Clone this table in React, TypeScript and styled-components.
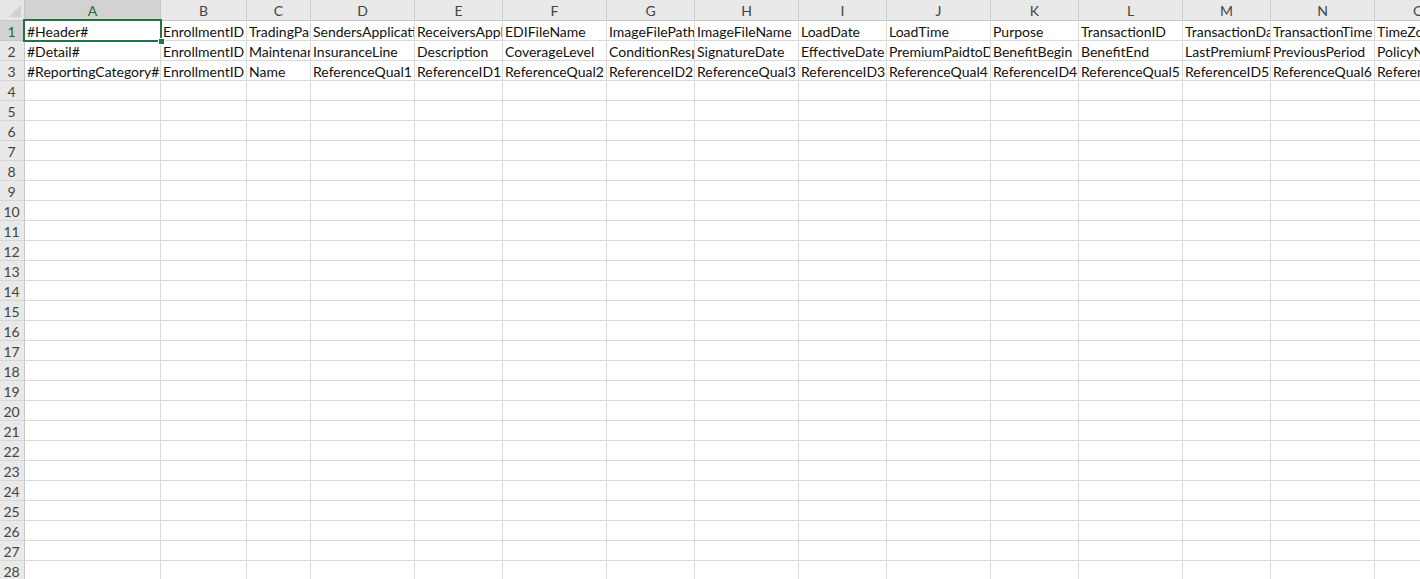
import React from "react";
import styled, { createGlobalStyle } from "styled-components";

const GlobalStyle = createGlobalStyle`
  html, body { margin: 0; padding: 0; background: #ffffff; overflow: hidden; }
  body { font-family: Lato, "Liberation Sans", sans-serif; }
`;

const COLS: { letter: string; width: number }[] = [
  { letter: "A", width: 136 },
  { letter: "B", width: 86 },
  { letter: "C", width: 64 },
  { letter: "D", width: 104 },
  { letter: "E", width: 88 },
  { letter: "F", width: 104 },
  { letter: "G", width: 88 },
  { letter: "H", width: 104 },
  { letter: "I", width: 88 },
  { letter: "J", width: 104 },
  { letter: "K", width: 88 },
  { letter: "L", width: 104 },
  { letter: "M", width: 88 },
  { letter: "N", width: 104 },
  { letter: "O", width: 88 },
];

const DATA: string[][] = [
  ["#Header#", "EnrollmentID", "TradingPartnerID", "SendersApplicationID", "ReceiversApplicationID", "EDIFileName", "ImageFilePath", "ImageFileName", "LoadDate", "LoadTime", "Purpose", "TransactionID", "TransactionDate", "TransactionTime", "TimeZone"],
  ["#Detail#", "EnrollmentID", "MaintenanceTypeCode", "InsuranceLine", "Description", "CoverageLevel", "ConditionResponse", "SignatureDate", "EffectiveDate", "PremiumPaidtoDate", "BenefitBegin", "BenefitEnd", "LastPremiumPaidDate", "PreviousPeriod", "PolicyNumber"],
  ["#ReportingCategory#", "EnrollmentID", "Name", "ReferenceQual1", "ReferenceID1", "ReferenceQual2", "ReferenceID2", "ReferenceQual3", "ReferenceID3", "ReferenceQual4", "ReferenceID4", "ReferenceQual5", "ReferenceID5", "ReferenceQual6", "ReferenceID6"],
];

const ROW_COUNT = 28;

const Sheet = styled.div`
  position: relative;
  width: 1420px;
  height: 579px;
  overflow: hidden;
  display: grid;
  grid-template-columns: 25px ${COLS.map((c) => `${c.width}px`).join(" ")};
  grid-template-rows: 21px;
  grid-auto-rows: 20px;
  font-family: Lato, "Liberation Sans", sans-serif;
`;

const Corner = styled.div`
  position: relative;
  background: #e6e6e6;
  border-right: 1px solid #c6c6c6;
  border-bottom: 1px solid #c6c6c6;
  box-sizing: border-box;
  &::after {
    content: "";
    position: absolute;
    right: 3px;
    bottom: 3px;
    width: 0;
    height: 0;
    border-left: 12px solid transparent;
    border-bottom: 12px solid #d0d0d0;
  }
`;

const ColHeader = styled.div<{ $active?: boolean }>`
  box-sizing: border-box;
  background: ${(p) => (p.$active ? "#d2d2d2" : "#e9e9e9")};
  border-right: 1px solid ${(p) => (p.$active ? "#c6c6c6" : "#d2d2d2")};
  border-bottom: 1px solid #c6c6c6;
  color: ${(p) => (p.$active ? "#1e6b41" : "#444444")};
  font-size: 14px;
  display: flex;
  align-items: center;
  justify-content: center;
  padding-top: 1px;
`;

const RowHeader = styled.div<{ $active?: boolean }>`
  box-sizing: border-box;
  background: ${(p) => (p.$active ? "#d2d2d2" : "#e9e9e9")};
  border-right: 1px solid #c6c6c6;
  border-bottom: 1px solid ${(p) => (p.$active ? "#c6c6c6" : "#d6d6d6")};
  color: ${(p) => (p.$active ? "#1e6b41" : "#444444")};
  font-size: 14px;
  line-height: 16px;
  display: flex;
  align-items: flex-end;
  justify-content: center;
  padding-bottom: 0;
  padding-right: 1px;
`;

const Cell = styled.div`
  box-sizing: border-box;
  border-right: 1px solid #dadada;
  border-bottom: 1px solid #dadada;
  color: #111111;
  font-size: 14px;
  white-space: nowrap;
  overflow: hidden;
  padding: 0 0 0 2px;
  display: flex;
  align-items: flex-end;
  line-height: 16px;
`;

const Selection = styled.div`
  position: absolute;
  left: 23px;
  top: 19px;
  width: 139px;
  height: 23px;
  box-sizing: border-box;
  border: 2px solid #217346;
  pointer-events: none;
`;

const FillHandle = styled.div`
  position: absolute;
  right: -5px;
  bottom: -5px;
  width: 7px;
  height: 7px;
  box-sizing: border-box;
  background: #217346;
  border: 1px solid #ffffff;
`;

export default function App() {
  const rows = Array.from({ length: ROW_COUNT }, (_, i) => i);
  return (
    <>
      <GlobalStyle />
      <Sheet>
        <Corner />
        {COLS.map((c, ci) => (
          <ColHeader key={c.letter} $active={ci === 0}>
            {c.letter}
          </ColHeader>
        ))}
        {rows.map((r) => (
          <React.Fragment key={r}>
            <RowHeader $active={r === 0}>{r + 1}</RowHeader>
            {COLS.map((c, ci) => (
              <Cell key={c.letter}>{DATA[r]?.[ci] ?? ""}</Cell>
            ))}
          </React.Fragment>
        ))}
        <Selection>
          <FillHandle />
        </Selection>
      </Sheet>
    </>
  );
}
